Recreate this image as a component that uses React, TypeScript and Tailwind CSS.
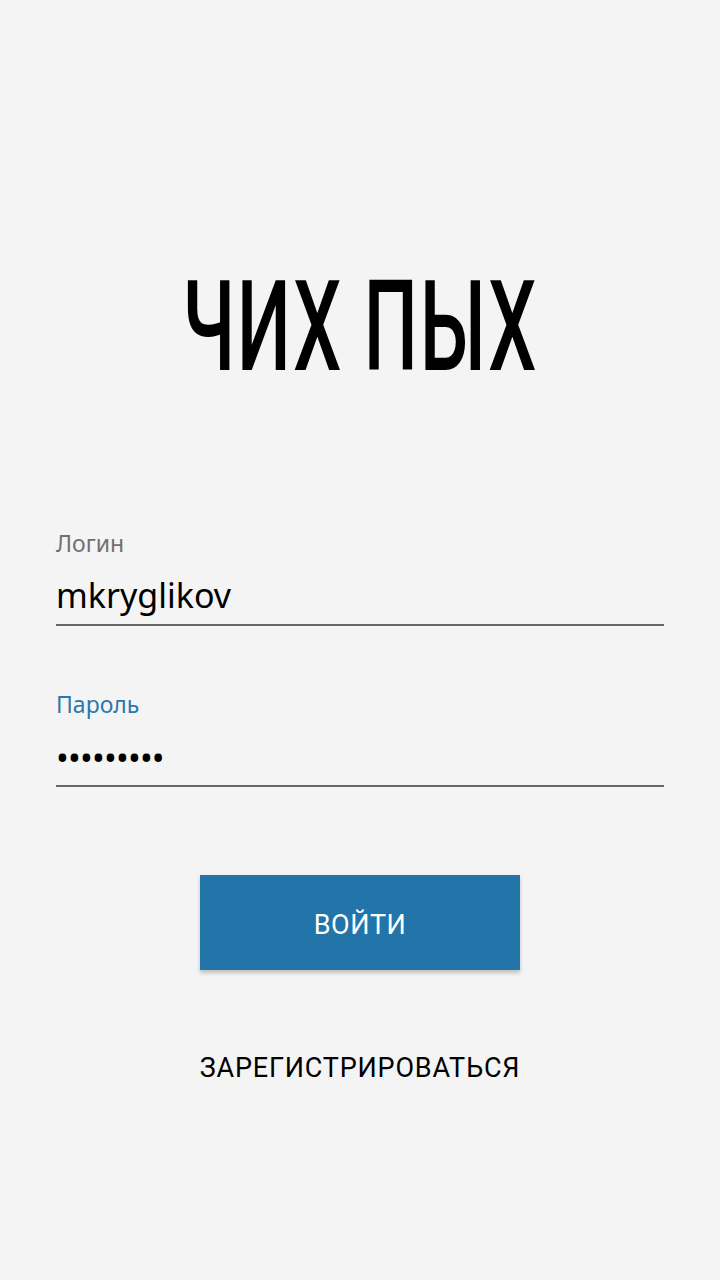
import React from "react";

export default function App() {
  const noto = { fontFamily: '"Noto Sans", "Open Sans", sans-serif' };
  const roboto = { fontFamily: 'Roboto, "Noto Sans", sans-serif' };
  return (
    <div className="min-h-[1280px] w-full bg-[#f4f4f4] flex flex-col">
      <div className="mt-[263px] h-[127px] text-center leading-none text-black whitespace-nowrap" style={roboto}>
        <span className="inline-block scale-x-[0.6] text-[127px] font-medium leading-none tracking-[3px]">ЧИХ ПЫХ</span>
      </div>

      <div className="px-[56px] flex flex-col" style={noto}>
        <div className="mt-[138px] text-[23px] leading-[30px] text-[#707070]">Логин</div>
        <div className="mt-[15px] text-[34px] leading-[44px] text-black">mkryglikov</div>
        <div className="mt-[7px] h-[2px] bg-[#666666]" />

        <div className="mt-[63px] text-[23px] leading-[30px] text-[#2a78ae]">Пароль</div>
        <div className="mt-[16px] text-[34px] leading-[44px] text-black tracking-[-0.8px]">•••••••••</div>
        <div className="mt-[6px] h-[2px] bg-[#666666]" />
      </div>

      <div className="mt-[88px] flex justify-center" style={roboto}>
        <button className="w-[320px] h-[95px] pt-[5px] bg-[#2274a9] text-white text-[27px] tracking-[0.5px] shadow-[0_3px_4px_rgba(0,0,0,0.22)]">
          ВОЙТИ
        </button>
      </div>

      <div className="mt-[80px] text-center text-[27px] leading-[36px] text-black tracking-[0.8px]" style={roboto}>
        ЗАРЕГИСТРИРОВАТЬСЯ
      </div>
    </div>
  );
}
